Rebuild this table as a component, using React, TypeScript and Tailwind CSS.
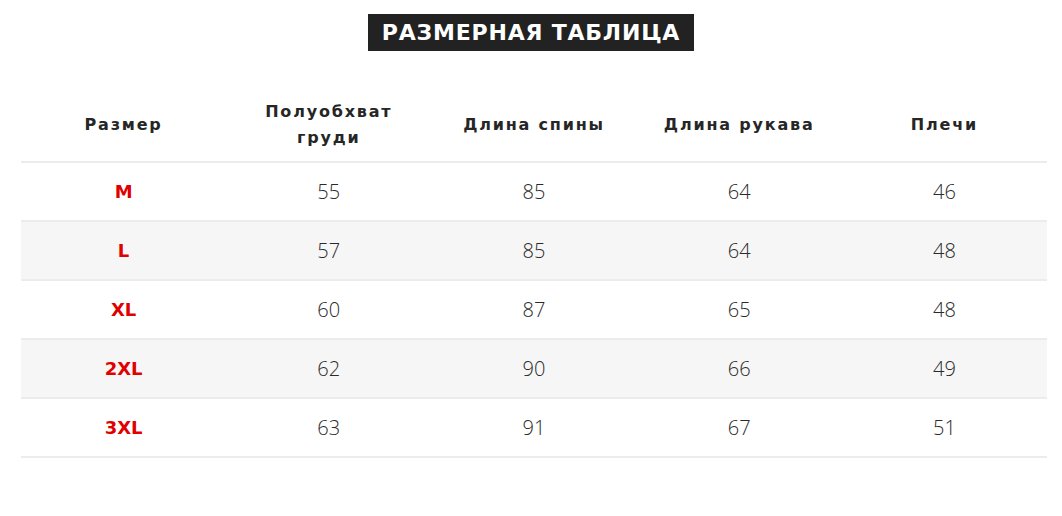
import React from 'react';

const headers = ['Размер', 'Полуобхват груди', 'Длина спины', 'Длина рукава', 'Плечи'];

const rows = [
  { size: 'M', values: [55, 85, 64, 46] },
  { size: 'L', values: [57, 85, 64, 48] },
  { size: 'XL', values: [60, 87, 65, 48] },
  { size: '2XL', values: [62, 90, 66, 49] },
  { size: '3XL', values: [63, 91, 67, 51] },
];

const App: React.FC = () => {
  return (
    <div className="w-[1062px] h-[516px] bg-white overflow-hidden font-['DejaVu_Sans',sans-serif]">
      <div className="flex justify-center pt-[14px]">
        <h1 className="h-[37px] w-[326px] bg-[#222222] text-white text-[22px] font-bold tracking-[0.8px] flex items-center justify-center">
          РАЗМЕРНАЯ ТАБЛИЦА
        </h1>
      </div>

      <div className="ml-[21px] w-[1026px] mt-[38px]">
        {/* Header */}
        <div className="grid grid-cols-5 h-[74px] border-b-2 border-[#ececec]">
          {headers.map((h) => (
            <div
              key={h}
              className="flex items-center justify-center text-center text-[16px] font-bold tracking-[1.8px] leading-[26px] text-[#262626] px-4"
            >
              {h}
            </div>
          ))}
        </div>

        {/* Body */}
        {rows.map((r, i) => (
          <div
            key={r.size}
            className={`grid grid-cols-5 h-[59px] border-b-2 border-[#ececec] ${i % 2 === 1 ? 'bg-[#f6f6f6]' : 'bg-white'}`}
          >
            <div className="flex items-center justify-center text-[18px] font-bold text-[#e00000]">
              {r.size}
            </div>
            {r.values.map((v, j) => (
              <div
                key={j}
                className="flex items-center justify-center text-[20px] font-light text-[#2a2a2a] font-['Open_Sans',sans-serif]"
              >
                {v}
              </div>
            ))}
          </div>
        ))}
      </div>
    </div>
  );
};

export default App;
